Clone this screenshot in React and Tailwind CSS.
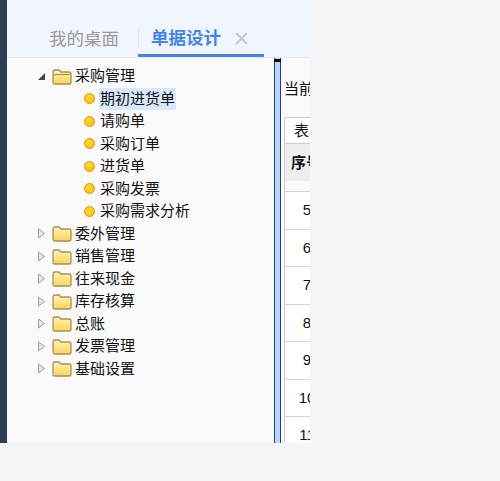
import React from 'react';

const CHILDREN = ['期初进货单', '请购单', '采购订单', '进货单', '采购发票', '采购需求分析'];
const GROUPS = ['委外管理', '销售管理', '往来现金', '库存核算', '总账', '发票管理', '基础设置'];
const ROWS = ['5', '6', '7', '8', '9', '10', '11'];

function Folder({ open }) {
  return (
    <svg width="20" height="17" viewBox="0 0 20 17" className="shrink-0">
      <defs>
        <linearGradient id="folderFill" x1="0" y1="0" x2="0" y2="1">
          <stop offset="0" stopColor="#fff3b8" />
          <stop offset="1" stopColor="#f9d55e" />
        </linearGradient>
      </defs>
      <path d="M1 4.5 Q1 2 3 2 H7 L9 4 H17 Q19 4 19 6 V14 Q19 16 17 16 H3 Q1 16 1 14 Z" fill="url(#folderFill)" stroke="#ab9150" strokeWidth="1.3" />
      {open && <path d="M1.5 8 Q2 6.5 4 6.5 H18.5" fill="none" stroke="#ab9150" strokeWidth="1" />}
    </svg>
  );
}

function Arrow({ open }) {
  if (open) {
    return (
      <svg width="9" height="9" viewBox="0 0 9 9" className="shrink-0">
        <path d="M8 1 V8 H1 Z" fill="#444" />
      </svg>
    );
  }
  return (
    <svg width="9" height="11" viewBox="0 0 9 11" className="shrink-0">
      <path d="M1.5 1 L7.5 5.5 L1.5 10 Z" fill="#e8e8e8" stroke="#a0a0a0" />
    </svg>
  );
}

function GroupRow({ label, open }) {
  return (
    <div className="flex items-center h-[22.5px] pl-[30px]">
      <div className="w-[15px] flex justify-start"><Arrow open={open} /></div>
      <Folder open={open} />
      <span className="ml-[3px] whitespace-nowrap">{label}</span>
    </div>
  );
}

function ChildRow({ label, active }) {
  return (
    <div className="flex items-center h-[22.5px] pl-[77px]">
      <span className="w-[11px] h-[11px] rounded-full border border-[#dd8f1e] bg-[radial-gradient(circle_at_40%_35%,#ffdc30,#ffb800)] shrink-0" />
      <span className={`ml-[4px] px-[1px] h-[22px] leading-[22px] whitespace-nowrap ${active ? 'bg-[#d9e8fb]' : ''}`}>{label}</span>
    </div>
  );
}

export default function App() {
  return (
    <div className="w-[500px] h-[481px] bg-[#f5f5f5] overflow-hidden" style={{ fontFamily: '"Liberation Sans", "Noto Sans CJK SC", sans-serif' }}>
      <div className="w-[310px] h-[443px] flex overflow-hidden bg-[#fafafa]">
        <div className="w-[7px] shrink-0 bg-[#2f3d52]" />
        <div className="flex-1 min-w-0 flex flex-col">
          <div className="h-[58px] shrink-0 bg-[#f1f6fe] border-b border-[#e6ebf2] flex items-end pl-[42px]">
            <div className="w-[89px] h-[30px] text-[17.5px] leading-[24px] text-[#9a9a9a] whitespace-nowrap">我的桌面</div>
            <div className="w-[126px] h-[28px] border-b-[3px] border-[#4285ea] flex relative">
              <div className="w-[1px] h-[19px] bg-[#dfe5ed]" />
              <span className="ml-[12px] -mt-[3px] text-[17.5px] leading-[24px] font-bold text-[#4285ea] whitespace-nowrap">单据设计</span>
              <svg width="13" height="13" viewBox="0 0 13 13" className="ml-[14px] mt-[3px]">
                <path d="M1 1 L12 12 M12 1 L1 12" stroke="#c4c9d0" strokeWidth="2" />
              </svg>
            </div>
          </div>
          <div className="flex-1 min-h-0 flex">
            <div className="w-[267px] shrink-0 pt-[7px] text-[15px] text-[#111]">
              <GroupRow label="采购管理" open />
              {CHILDREN.map((c, i) => <ChildRow key={c} label={c} active={i === 0} />)}
              {GROUPS.map((g) => <GroupRow key={g} label={g} />)}
            </div>
            <div className="w-[7px] shrink-0 bg-[#b9d4f6] border-x border-[#1d3f73] relative">
              <div className="absolute -left-[1px] -right-[1px] top-[1px] h-[3px] bg-[#111]" />
            </div>
            <div className="flex-1 min-w-0 overflow-hidden bg-[#fafafa] pl-[3px] text-[15px] text-[#111]">
              <div className="h-[59px] pt-[21px] leading-[20px] whitespace-nowrap">当前位置</div>
              <div className="w-[60px] h-[27px] bg-white border border-[#ccc] rounded-t-[2px] pl-[9px] leading-[25px] whitespace-nowrap">表单</div>
              <div className="w-[60px] border-l border-[#ccc]">
                <div className="h-[37px] bg-[#eeeeee] pl-[6px] leading-[37px] font-bold whitespace-nowrap">序号</div>
                <div className="h-[10px]" />
                {ROWS.map((r) => (
                  <div key={r} className="h-[37.5px] bg-white border-t border-[#d4d4d4] flex items-center justify-center w-[44px]">{r}</div>
                ))}
              </div>
            </div>
          </div>
        </div>
      </div>
    </div>
  );
}
